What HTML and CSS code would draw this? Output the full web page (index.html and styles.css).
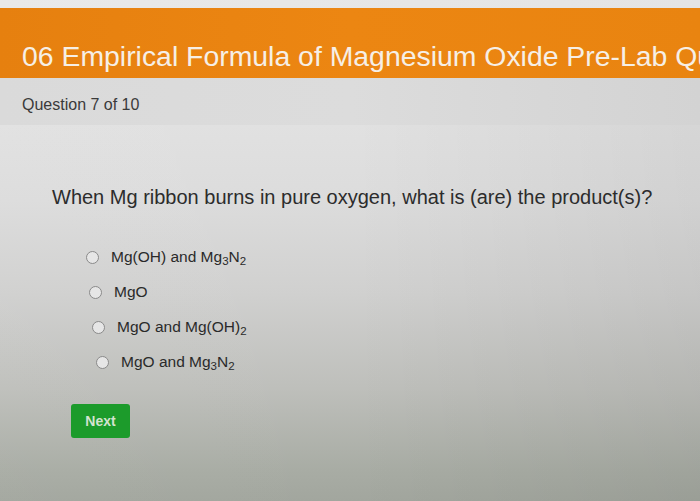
FILE: index.html
```html
<!DOCTYPE html>
<html>
<head>
<meta charset="utf-8">
<link rel="stylesheet" href="styles.css">
</head>
<body>
<div class="page">
  <div class="top-strip"></div>
  <header class="title-bar">
    <h1 class="title">06 Empirical Formula of Magnesium Oxide Pre-Lab Quiz</h1>
  </header>
  <div class="sub-bar">
    <span class="counter">Question 7 of 10</span>
  </div>
  <main class="content">
    <p class="question">When Mg ribbon burns in pure oxygen, what is (are) the product(s)?</p>
    <ul class="options">
      <li class="option"><span class="radio"></span><span class="label">Mg(OH) and Mg<sub>3</sub>N<sub>2</sub></span></li>
      <li class="option"><span class="radio"></span><span class="label">MgO</span></li>
      <li class="option"><span class="radio"></span><span class="label">MgO and Mg(OH)<sub>2</sub></span></li>
      <li class="option"><span class="radio"></span><span class="label">MgO and Mg<sub>3</sub>N<sub>2</sub></span></li>
    </ul>
    <button class="next">Next</button>
  </main>
</div>
</body>
</html>
```

FILE: styles.css
```css
html, body {
  margin: 0;
  padding: 0;
}
body {
  width: 700px;
  height: 501px;
  overflow: hidden;
  font-family: "Liberation Sans", Arial, sans-serif;
  background: #a3a79f;
}
.page {
  width: 700px;
  height: 501px;
  display: flex;
  flex-direction: column;
  overflow: hidden;
}
.top-strip {
  height: 8px;
  background: linear-gradient(90deg, #e9e9e9, #e4e4e4);
  flex: none;
}
.title-bar {
  height: 70px;
  flex: none;
  background: linear-gradient(90deg, #e6800f 0%, #ec8612 50%, #e98410 100%);
  display: flex;
  align-items: center;
  padding-left: 22px;
  white-space: nowrap;
  overflow: hidden;
}
.title {
  margin: 0;
  padding-top: 27px;
  font-weight: normal;
  font-size: 28.4px;
  color: #f6efe6;
}
.sub-bar {
  height: 47px;
  flex: none;
  background: linear-gradient(90deg, #dadada 0%, #dcdcdc 50%, #d3d3d3 100%);
  display: flex;
  align-items: center;
  padding-left: 22px;
}
.counter {
  font-size: 16px;
  color: #3a3a3a;
  padding-top: 6px;
}
.content {
  flex: 1;
  background:
    linear-gradient(90deg, rgba(255,255,255,0.03) 0%, rgba(0,0,0,0) 50%, rgba(0,0,0,0.05) 100%),
    linear-gradient(180deg, #e1e1e1 0%, #dcdcdc 20%, #d0d0cf 45%, #bebfbb 70%, #a8aca4 92%, #a2a69e 100%);
  padding: 61px 0 0 52px;
}
.question {
  margin: 0;
  font-size: 20px;
  color: #2c2c2c;
}
.options {
  list-style: none;
  margin: 39px 0 0 34px;
  padding: 0;
  display: flex;
  flex-direction: column;
  gap: 17px;
}
.option {
  display: flex;
  align-items: center;
  gap: 12px;
  height: 18px;
  font-size: 15.5px;
  color: #2a2a2a;
}
.option:nth-child(2) { margin-left: 3px; }
.option:nth-child(3) { margin-left: 6px; }
.option:nth-child(4) { margin-left: 10px; }
.radio {
  width: 11px;
  height: 11px;
  border: 1.5px solid #8a8a8a;
  border-radius: 50%;
  background: #e6e6e6;
  flex: none;
}
.label sub {
  font-size: 11.5px;
  vertical-align: -3px;
  line-height: 0;
}
.next {
  margin: 33px 0 0 19px;
  display: block;
  width: 59px;
  height: 34px;
  border: none;
  border-radius: 3px;
  background: #1c9b2b;
  color: #d3e3cf;
  font-family: "Liberation Sans", Arial, sans-serif;
  font-weight: bold;
  font-size: 14px;
  padding: 0;
}
```
